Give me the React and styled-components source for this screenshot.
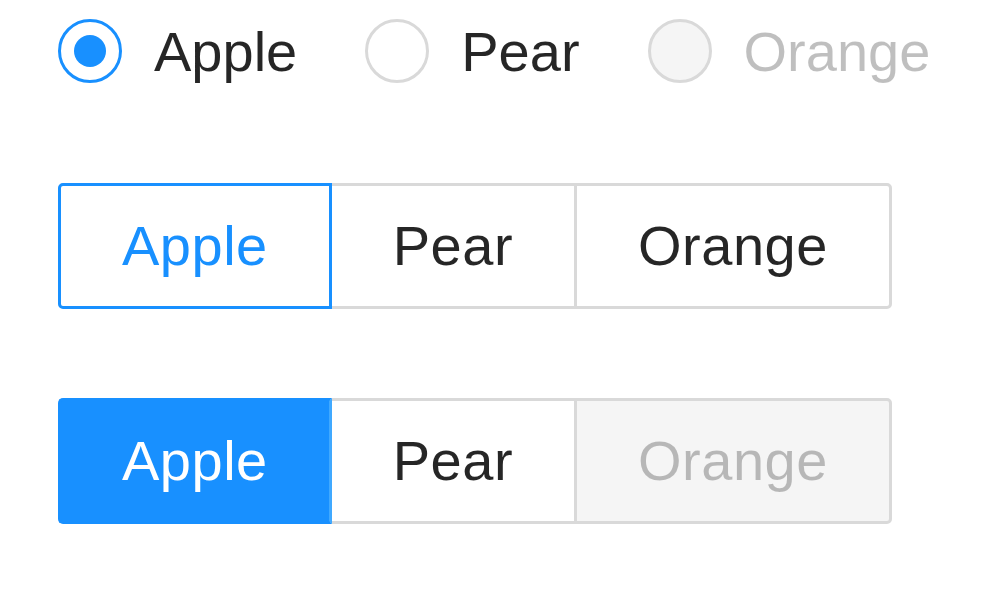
import styled, { createGlobalStyle, css } from "styled-components";

const Blue = "#1890ff";
const BlueLight = "#40a9ff";
const Border = "#d9d9d9";
const Text = "rgba(0, 0, 0, 0.85)";
const Disabled = "rgba(0, 0, 0, 0.25)";
const DisabledBg = "#f5f5f5";

const GlobalStyle = createGlobalStyle`
  html, body {
    margin: 0;
    padding: 0;
    background: #fff;
  }
  body {
    font-family: "Liberation Sans", Arial, sans-serif;
  }
`;

const Page = styled.div`
  padding: 0 0 0 58px;
  display: flex;
  flex-direction: column;
  align-items: flex-start;
`;

const RadioRow = styled.div`
  display: flex;
  align-items: center;
  height: 102px;
`;

const RadioItem = styled.label`
  display: flex;
  align-items: center;
  margin-right: 36px;
  cursor: ${(p) => (p.$disabled ? "not-allowed" : "pointer")};
`;

const Circle = styled.span`
  box-sizing: border-box;
  width: 64px;
  height: 64px;
  border-radius: 50%;
  border: 3px solid ${(p) => (p.$checked ? Blue : Border)};
  background: ${(p) => (p.$disabled ? DisabledBg : "#fff")};
  display: flex;
  align-items: center;
  justify-content: center;
  flex-shrink: 0;
`;

const Dot = styled.span`
  width: 32px;
  height: 32px;
  border-radius: 50%;
  background: ${Blue};
`;

const RadioLabel = styled.span`
  padding: 0 32px;
  font-size: 56px;
  line-height: 80px;
  margin-top: 2px;
  color: ${(p) => (p.$disabled ? Disabled : Text)};
`;

const Group = styled.div`
  display: flex;
  margin-top: ${(p) => p.$top}px;
`;

const SegButton = styled.span`
  position: relative;
  box-sizing: border-box;
  height: 126px;
  padding: 0 61px;
  font-size: 56px;
  letter-spacing: 0.5px;
  line-height: 120px;
  border: 3px solid ${Border};
  background: #fff;
  color: ${Text};
  white-space: nowrap;

  & + & {
    margin-left: -3px;
  }
  &:first-child {
    border-radius: 5px 0 0 5px;
  }
  &:last-child {
    border-radius: 0 5px 5px 0;
  }

  ${(p) =>
    p.$disabled &&
    css`
      background: ${DisabledBg};
      color: ${Disabled};
    `}

  ${(p) =>
    p.$checked &&
    !p.$solid &&
    css`
      z-index: 1;
      border-color: ${Blue};
      color: ${Blue};
    `}

  ${(p) =>
    p.$checked &&
    p.$solid &&
    css`
      z-index: 1;
      border-color: ${Blue};
      border-right-color: ${BlueLight};
      background: ${Blue};
      color: #fff;
    `}
`;

const options = [
  { label: "Apple", checked: true },
  { label: "Pear" },
  { label: "Orange" },
];

function App() {
  return (
    <>
      <GlobalStyle />
      <Page>
        <RadioRow>
          {[
            { label: "Apple", checked: true },
            { label: "Pear" },
            { label: "Orange", disabled: true },
          ].map((o) => (
            <RadioItem key={o.label} $disabled={o.disabled}>
              <Circle $checked={o.checked} $disabled={o.disabled}>
                {o.checked && <Dot />}
              </Circle>
              <RadioLabel $disabled={o.disabled}>{o.label}</RadioLabel>
            </RadioItem>
          ))}
        </RadioRow>

        <Group $top={81}>
          {options.map((o) => (
            <SegButton key={o.label} $checked={o.checked}>
              {o.label}
            </SegButton>
          ))}
        </Group>

        <Group $top={89}>
          {options.map((o) => (
            <SegButton
              key={o.label}
              $checked={o.checked}
              $solid
              $disabled={o.label === "Orange"}
            >
              {o.label}
            </SegButton>
          ))}
        </Group>
      </Page>
    </>
  );
}

export default App;
